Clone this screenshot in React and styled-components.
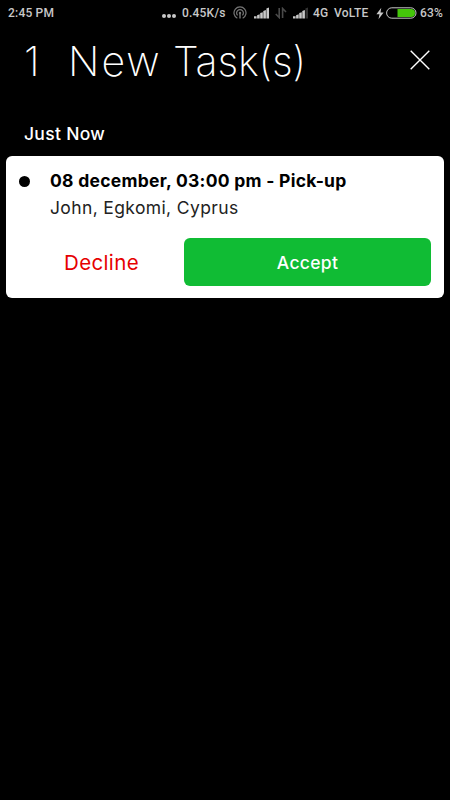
import React from "react";
import styled, { createGlobalStyle } from "styled-components";

const tasks = [
  {
    id: 1,
    title: "08 december, 03:00 pm - Pick-up",
    address: "John, Egkomi, Cyprus",
  },
];

export default function App() {
  return (
    <>
      <GlobalStyle />
      <Screen>
        <StatusBar />
        <Header>
          <Count>{tasks.length}</Count>
          <Title>
            <Word $spacing={2}>New</Word> <Word $spacing={-0.2}>Task(s)</Word>
          </Title>
          <CloseButton aria-label="Close">
            <svg width="20" height="20" viewBox="0 0 20 20">
              <path d="M0.7 0.7 L19.3 19.3 M19.3 0.7 L0.7 19.3" stroke="#fff" strokeWidth="1.4" />
            </svg>
          </CloseButton>
        </Header>
        <SectionLabel>Just Now</SectionLabel>
        {tasks.map((task) => (
          <TaskCard key={task.id} task={task} />
        ))}
      </Screen>
    </>
  );
}

function TaskCard({ task }) {
  return (
    <Card>
      <Info>
        <Dot />
        <Details>
          <TaskTitle>{task.title}</TaskTitle>
          <Address>{task.address}</Address>
        </Details>
      </Info>
      <Actions>
        <Decline>Decline</Decline>
        <Accept>Accept</Accept>
      </Actions>
    </Card>
  );
}

function StatusBar() {
  return (
    <Bar>
      <BarText $width={46}>2:45 PM</BarText>
      <Spacer />
      <Dots>
        <i />
        <i />
        <i />
      </Dots>
      <BarText $left={6} $width={45}>0.45K/s</BarText>
      <BarIcon $left={6} width="14" height="14" viewBox="0 0 14 14" fill="none">
        <path d="M4.3 12.3 A6 6 0 1 1 9.7 12.3" stroke="#777" strokeWidth="1.2" />
        <path d="M4.6 9.4 A3.4 3.4 0 1 1 9.4 9.4" stroke="#777" strokeWidth="1.2" />
        <circle cx="7" cy="7" r="1.2" fill="#777" />
        <path d="M7 8 V12.5" stroke="#777" strokeWidth="1.4" />
      </BarIcon>
      <Signal $left={7} />
      <BarIcon $left={5} width="12" height="12" viewBox="0 0 12 12" fill="none">
        <path d="M4.2 1 V10.5 L0.8 7 M7.6 11 V1.5 L11 5" stroke="#4a4a4a" strokeWidth="1.6" />
      </BarIcon>
      <Signal $left={6} weak />
      <BarText $left={4} $width={16}>4G</BarText>
      <BarText $left={5} $width={36}>VoLTE</BarText>
      <BarIcon $left={6} width="8" height="13" viewBox="0 0 8 13">
        <path d="M5.3 0.8 L0.4 7.2 H3.5 L2.5 12.3 L7.6 5.5 H4.5 Z" fill="#c8c8c8" />
      </BarIcon>
      <BarIcon $left={2} width="31" height="12" viewBox="0 0 31 12">
        <rect x="0.6" y="0.8" width="29.4" height="10.4" rx="5.2" fill="none" stroke="#c8c8c8" />
        <path d="M11.5 2 H25 A4 4 0 0 1 25 10 H11.5 Z" fill="#45c60a" />
      </BarIcon>
      <BarText $left={3} $width={22}>63%</BarText>
    </Bar>
  );
}

function Signal({ weak, ...props }) {
  return (
    <BarIcon width="16" height="12" viewBox="0 0 16 12" {...props}>
      {[2.2, 4.2, 6.3, 8.5, 11].map((h, i) => (
        <path
          key={h}
          d={`M${i * 3.1} 11.5 V${13.4 - h - (i === 0 ? 2 : 1)} L${i * 3.1 + 2.6} ${11.5 - h} V11.5 Z`}
          fill={weak && i === 4 ? "#333" : "#c8c8c8"}
        />
      ))}
    </BarIcon>
  );
}

const GlobalStyle = createGlobalStyle`
  * {
    box-sizing: border-box;
  }
  body {
    margin: 0;
    background-color: #000;
  }
  button {
    border: 0;
    padding: 0;
    background: none;
    font-family: inherit;
    cursor: pointer;
  }
`;

const Screen = styled.main`
  min-height: 100vh;
  background-color: #000;
  color: #fff;
  font-family: "Inter", sans-serif;
`;

const Bar = styled.div`
  display: flex;
  align-items: center;
  height: 26px;
  padding: 0 8px 0 8px;
  font-family: "Roboto", sans-serif;
  font-size: 12px;
  font-weight: 500;
  letter-spacing: 0.2px;
  color: #c8c8c8;
`;

const BarText = styled.span`
  flex: none;
  width: ${({ $width }) => $width}px;
  margin-left: ${({ $left = 0 }) => $left}px;
  white-space: nowrap;
`;

const BarIcon = styled.svg`
  flex: none;
  margin-left: ${({ $left = 0 }) => $left}px;
`;

const Spacer = styled.div`
  flex: 1;
`;

const Dots = styled.span`
  display: flex;
  gap: 1px;
  padding-top: 6px;
  i {
    width: 4px;
    height: 4px;
    border-radius: 50%;
    background-color: #c8c8c8;
  }
`;

const Header = styled.header`
  display: flex;
  align-items: center;
  height: 68px;
  padding: 0 20px 0 24px;
  font-size: 41px;
  font-weight: 200;
  line-height: 50px;
`;

const Count = styled.span`
  width: 44px;
  padding-top: 2px;
`;

const Title = styled.h1`
  flex: 1;
  margin: 0;
  padding-top: 2px;
  font-size: inherit;
  font-weight: inherit;
`;

const Word = styled.span`
  letter-spacing: ${({ $spacing }) => $spacing}px;
`;

const CloseButton = styled.button`
  display: flex;
`;

const SectionLabel = styled.h2`
  margin: 29px 0 12px 24px;
  font-size: 17.5px;
  line-height: 21px;
  font-weight: 500;
  letter-spacing: 0.3px;
`;

const Card = styled.article`
  height: 142px;
  margin: 0 6px;
  padding: 11px 13px;
  border-radius: 6px;
  background-color: #fff;
  color: #000;
`;

const Info = styled.div`
  display: flex;
`;

const Dot = styled.span`
  width: 11px;
  height: 11px;
  margin: 9px 20px 0 0;
  border-radius: 50%;
  background-color: #000;
`;

const Details = styled.div`
  line-height: 27px;
  font-size: 17.5px;
  white-space: nowrap;
`;

const TaskTitle = styled.div`
  font-weight: 700;
  letter-spacing: 0.27px;
`;

const Address = styled.div`
  color: #222;
  letter-spacing: 0.37px;
`;

const Actions = styled.div`
  display: flex;
  height: 48px;
  margin-top: 17px;
`;

const Decline = styled.button`
  width: 165px;
  color: #e60000;
  font-size: 20.5px;
  letter-spacing: 0.35px;
`;

const Accept = styled.button`
  flex: 1;
  border-radius: 6px;
  background-color: #10bc34;
  color: #fff;
  font-size: 17.5px;
  font-weight: 500;
  letter-spacing: 0.3px;
`;
